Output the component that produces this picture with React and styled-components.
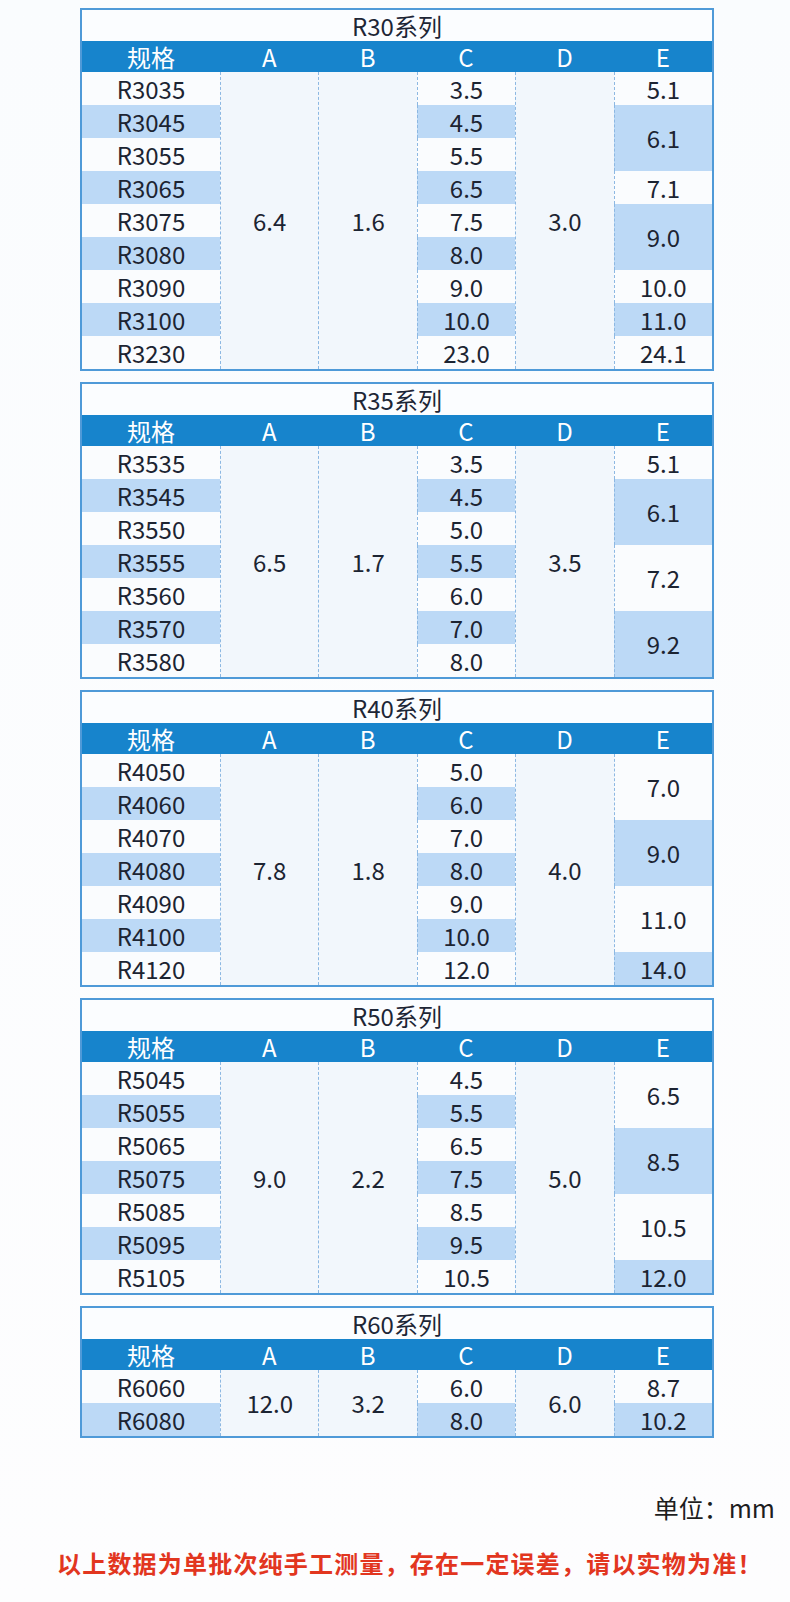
import React from 'react';
import styled, { createGlobalStyle } from 'styled-components';

const tables = [
  {
    title: 'R30系列',
    codes: ['R3035', 'R3045', 'R3055', 'R3065', 'R3075', 'R3080', 'R3090', 'R3100', 'R3230'],
    a: '6.4',
    b: '1.6',
    c: ['3.5', '4.5', '5.5', '6.5', '7.5', '8.0', '9.0', '10.0', '23.0'],
    d: '3.0',
    e: [['5.1', 1], ['6.1', 2], ['7.1', 1], ['9.0', 2], ['10.0', 1], ['11.0', 1], ['24.1', 1]],
  },
  {
    title: 'R35系列',
    codes: ['R3535', 'R3545', 'R3550', 'R3555', 'R3560', 'R3570', 'R3580'],
    a: '6.5',
    b: '1.7',
    c: ['3.5', '4.5', '5.0', '5.5', '6.0', '7.0', '8.0'],
    d: '3.5',
    e: [['5.1', 1], ['6.1', 2], ['7.2', 2], ['9.2', 2]],
  },
  {
    title: 'R40系列',
    codes: ['R4050', 'R4060', 'R4070', 'R4080', 'R4090', 'R4100', 'R4120'],
    a: '7.8',
    b: '1.8',
    c: ['5.0', '6.0', '7.0', '8.0', '9.0', '10.0', '12.0'],
    d: '4.0',
    e: [['7.0', 2], ['9.0', 2], ['11.0', 2], ['14.0', 1]],
  },
  {
    title: 'R50系列',
    codes: ['R5045', 'R5055', 'R5065', 'R5075', 'R5085', 'R5095', 'R5105'],
    a: '9.0',
    b: '2.2',
    c: ['4.5', '5.5', '6.5', '7.5', '8.5', '9.5', '10.5'],
    d: '5.0',
    e: [['6.5', 2], ['8.5', 2], ['10.5', 2], ['12.0', 1]],
  },
  {
    title: 'R60系列',
    codes: ['R6060', 'R6080'],
    a: '12.0',
    b: '3.2',
    c: ['6.0', '8.0'],
    d: '6.0',
    e: [['8.7', 1], ['10.2', 1]],
  },
];

const headers = ['规格', 'A', 'B', 'C', 'D', 'E'];

const SpecTable = ({ table }) => {
  const n = table.codes.length;
  let start = 1;
  const eCells = table.e.map(([value, span], i) => {
    const cell = (
      <Cell key={`e${i}`} $col={6} $row={start} $span={span} $hl={i % 2 === 1} $dashed>
        {value}
      </Cell>
    );
    start += span;
    return cell;
  });

  return (
    <TableBox>
      <TitleRow>{table.title}</TitleRow>
      <HeaderRow>
        {headers.map((h) => (
          <HeaderCell key={h}>{h}</HeaderCell>
        ))}
      </HeaderRow>
      <Body>
        {table.codes.map((code, i) => (
          <Cell key={code} $col={1} $row={i + 1} $span={1} $hl={i % 2 === 1}>
            {code}
          </Cell>
        ))}
        <Cell $col={2} $row={1} $span={n} $dashed $soft>
          {table.a}
        </Cell>
        <Cell $col={3} $row={1} $span={n} $dashed $soft>
          {table.b}
        </Cell>
        {table.c.map((v, i) => (
          <Cell key={`c${i}`} $col={4} $row={i + 1} $span={1} $hl={i % 2 === 1} $dashed>
            {v}
          </Cell>
        ))}
        <Cell $col={5} $row={1} $span={n} $dashed $soft>
          {table.d}
        </Cell>
        {eCells}
      </Body>
    </TableBox>
  );
};

const App = () => (
  <>
    <GlobalStyle />
    <Page>
      {tables.map((t) => (
        <SpecTable key={t.title} table={t} />
      ))}
      <Unit>单位：mm</Unit>
      <Notice>以上数据为单批次纯手工测量，存在一定误差，请以实物为准！</Notice>
    </Page>
  </>
);

const GlobalStyle = createGlobalStyle`
  body {
    margin: 0;
    background: #fbfcfd;
    font-family: "Noto Sans CJK SC", "Noto Sans", sans-serif;
  }
`;

const Page = styled.div`
  width: 790px;
  height: 1602px;
  box-sizing: border-box;
  padding-top: 8px;
  overflow: hidden;
  background: linear-gradient(180deg, #fafcfe 0%, #fdfdfe 100%);
`;

const TableBox = styled.div`
  width: 634px;
  margin: 0 0 11px 80px;
  box-sizing: border-box;
  border: 2px solid #4f9ad8;
  background: #f6f9fd;
`;

const TitleRow = styled.div`
  height: 31px;
  display: flex;
  align-items: center;
  justify-content: center;
  background: #fbfdff;
  color: #1d2636;
  font-size: 24px;
  line-height: 1;
`;

const HeaderRow = styled.div`
  height: 31px;
  display: grid;
  grid-template-columns: 138px repeat(5, 1fr);
  background: #1784cc;
`;

const HeaderCell = styled.div`
  display: flex;
  align-items: center;
  justify-content: center;
  color: #ffffff;
  font-size: 24px;
  line-height: 1;
`;

const Body = styled.div`
  display: grid;
  grid-template-columns: 138px repeat(5, 1fr);
  grid-auto-rows: 33px;
`;

const Cell = styled.div`
  grid-column: ${(p) => p.$col};
  grid-row: ${(p) => p.$row} / span ${(p) => p.$span};
  display: flex;
  align-items: center;
  justify-content: center;
  font-size: 24px;
  line-height: 1;
  color: #1c2432;
  background: ${(p) => (p.$hl ? '#bcd9f6' : p.$soft ? '#f2f7fc' : '#fafcfe')};
  border-left: ${(p) => (p.$dashed ? '1px dashed #8db8e2' : 'none')};
`;

const Unit = styled.div`
  margin-top: 53px;
  padding-right: 15px;
  text-align: right;
  line-height: 32px;
  font-size: 25px;
  color: #1e1e1e;
`;

const Notice = styled.div`
  margin-top: 24px;
  padding-left: 57px;
  line-height: 32px;
  font-size: 24px;
  font-weight: 700;
  letter-spacing: 1.2px;
  color: #e2361f;
`;

export default App;
